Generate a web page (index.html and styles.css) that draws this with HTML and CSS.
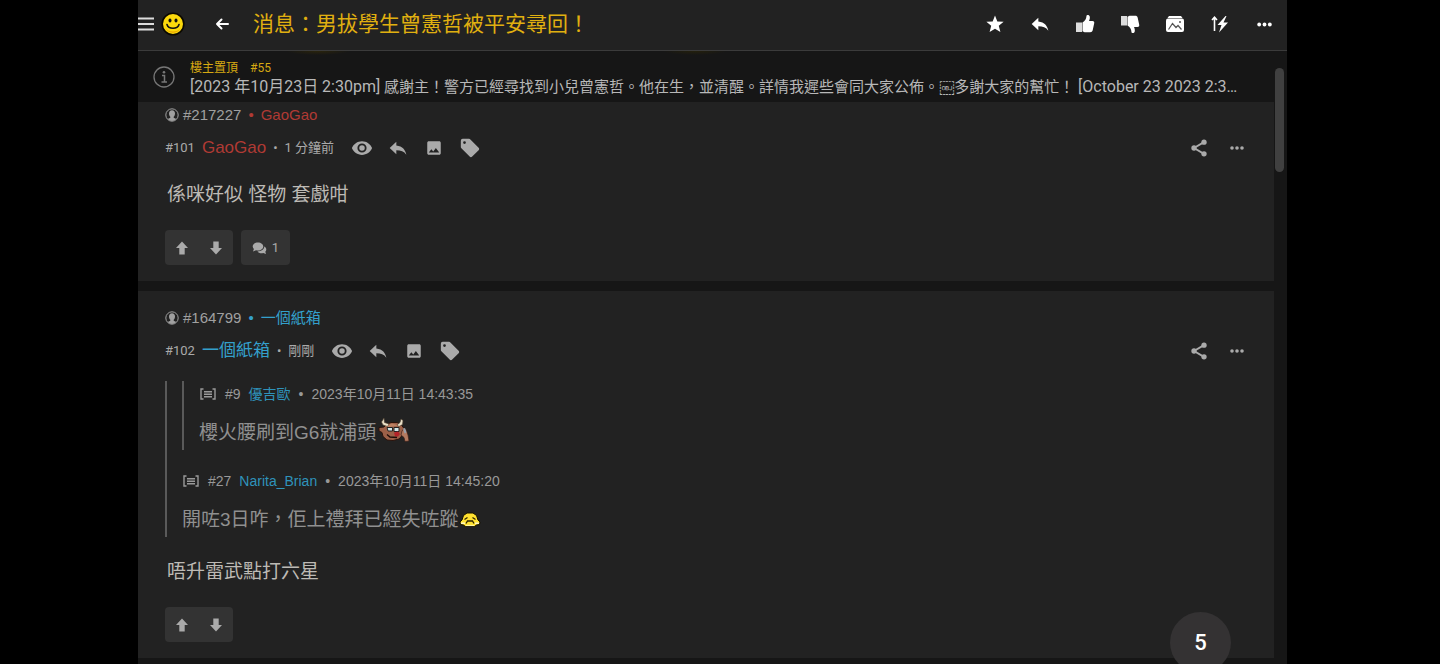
FILE: index.html
```html
<!DOCTYPE html>
<html lang="zh-HK">
<head>
<meta charset="utf-8">
<title>消息：男拔學生曾憲哲被平安尋回！</title>
<link rel="stylesheet" href="styles.css">
</head>
<body>
<svg class="sprite" aria-hidden="true">
  <symbol id="reply" viewBox="0 0 24 24"><path d="M10 9V4.500L2 12l8 7.500V14.800c5.500 0 9.200 1.500 12 5.200-1-5.500-4.500-10.200-12-11z"/></symbol>
  <symbol id="more" viewBox="0 0 24 24"><circle cx="4.500" cy="12" r="2.700"/><circle cx="12" cy="12" r="2.700"/><circle cx="19.500" cy="12" r="2.700"/></symbol>
  <symbol id="eye" viewBox="0 0 24 24"><path fill-rule="evenodd" d="M12 4.500C7 4.500 2.700 7.600 1 12c1.700 4.400 6 7.500 11 7.500s9.300-3.100 11-7.500c-1.700-4.400-6-7.500-11-7.500zM12 17a5 5 0 1 1 0-10 5 5 0 0 1 0 10zm0-8a3 3 0 1 0 0 6 3 3 0 0 0 0-6z"/></symbol>
  <symbol id="image" viewBox="0 0 24 24"><path d="M21 19V5c0-1.100-.9-2-2-2H5c-1.100 0-2 .9-2 2v14c0 1.100.9 2 2 2h14c1.100 0 2-.9 2-2zM8.500 13.500l2.500 3 3.500-4.500 4.500 6H5l3.500-4.500z"/></symbol>
  <symbol id="tag" viewBox="0 0 24 24"><path fill-rule="evenodd" d="M21.400 11.600l-9-9C12 2.200 11.500 2 11 2H4a2 2 0 0 0-2 2v7c0 .5.200 1 .6 1.400l9 9c.8.8 2 .8 2.800 0l7-7c.8-.8.800-2 0-2.800zM6 7.500a1.500 1.500 0 1 1 0-3 1.500 1.500 0 0 1 0 3z"/></symbol>
  <symbol id="share" viewBox="0 0 24 24"><path d="M18 5L6 12l12 7" fill="none" stroke="currentColor" stroke-width="2.200"/><circle cx="18" cy="5" r="3.200"/><circle cx="6" cy="12" r="3.200"/><circle cx="18" cy="19" r="3.200"/></symbol>
  <symbol id="user" viewBox="0 0 14 14"><circle cx="7" cy="7" r="6.200" fill="none" stroke="currentColor"/><path d="M7 2.200c2 0 3 1.400 3 3.300 0 1.600-.6 2.600-1.300 3.300v1l2.600 1.200C10 12.300 8.500 13 7 13s-3-.7-4.300-2l2.600-1.200v-1C4.600 8.100 4 7.100 4 5.500c0-1.900 1-3.300 3-3.300z"/></symbol>
  <symbol id="up" viewBox="0 0 14 14"><path d="M7 .5L13 7H9.700v6.500H4.300V7H1z"/></symbol>
  <symbol id="down" viewBox="0 0 14 14"><path d="M7 13.500L1 7h3.300V.5h5.400V7H13z"/></symbol>
  <symbol id="quote" viewBox="0 0 18 12"><path d="M4.500 1H2v10h2.500M13.500 1H16v10h-2.500M5 3.700h8M5 6.200h8M5 8.700h8" fill="none" stroke="currentColor" stroke-width="1.400"/></symbol>
  <symbol id="thumb" viewBox="0 0 20 20"><path d="M1 8.500h6V18H1z" fill="#ddd"/><path d="M7.500 8.500C10 7 11.300 5 11.500 1.800c.2-1.300 3-1.300 3.300 1 .2 1.600-.2 3-.8 4.300h3.500c1.500 0 2 1 1.700 2.200l-1.500 7c-.3 1.300-1.200 1.900-2.500 1.900H9.500l-2-1z"/></symbol>
</svg>
<div class="app">
  <header class="topbar">
    <button class="menu" aria-label="選單"><svg width="16" height="14" viewBox="0 0 16 14"><path d="M0 1.500h16M0 7h16M0 12.500h16" stroke="currentColor" stroke-width="2"/></svg></button>
    <a class="logo" href="#" aria-label="首頁"><svg width="24" height="24" viewBox="0 0 24 24"><circle cx="12" cy="12" r="10.800" fill="#fbd90c" stroke="#0b0800" stroke-width="1.600"/><path d="M4 15a8.500 8.500 0 0 0 16 0c-1.500 3-4.500 4.500-8 4.500S5.500 18 4 15z" fill="#e9a400"/><ellipse cx="9" cy="8.500" rx="1.500" ry="2" fill="#111"/><ellipse cx="15" cy="8.500" rx="1.500" ry="2" fill="#111"/><path d="M6 12.500c1.500 5 10.500 5 12 0" fill="none" stroke="#111" stroke-width="1.600" stroke-linecap="round"/></svg></a>
    <button class="back" aria-label="返回"><svg width="14" height="14" viewBox="0 0 14 14"><path d="M13 7H2M6.500 2.500L2 7l4.500 4.500" fill="none" stroke="currentColor" stroke-width="2" stroke-linecap="round" stroke-linejoin="round"/></svg></button>
    <h1>消息：男拔學生曾憲哲被平安尋回！</h1>
    <nav class="tools">
      <button aria-label="收藏"><svg width="18" height="18" viewBox="0 0 20 20"><path d="M10 .5l2.600 6.600 7 .4-5.400 4.500 1.800 7L10 15.200 4 19l1.800-7L.4 7.500l7-.4z"/></svg></button>
      <button aria-label="回覆"><svg width="20" height="20"><use href="#reply"/></svg></button>
      <button aria-label="正評"><svg width="20" height="20"><use href="#thumb"/></svg></button>
      <button aria-label="負評"><svg class="flip" width="20" height="20"><use href="#thumb"/></svg></button>
      <button aria-label="圖片"><svg width="18" height="18" viewBox="0 0 18 18"><path d="M3 1h12l1.500 2h-15z"/><rect y="3.500" width="18" height="13.500" rx="2"/><path d="M2.500 14.500l4-6 3.500 4 2-2 3.500 4" fill="none" stroke="#555" stroke-width="1.200"/><circle cx="14" cy="7" r="1" fill="#555"/></svg></button>
      <button aria-label="最新"><svg width="18" height="18" viewBox="0 0 18 18"><path d="M3.500 16V3M1 5l2.500-2.700L6 5" fill="none" stroke="currentColor" stroke-width="1.600"/><path d="M14.500 1L6.500 10h4l-2.500 7.500L17 7.500h-4.500L15.500 1z"/></svg></button>
      <button aria-label="更多"><svg width="17" height="17"><use href="#more"/></svg></button>
    </nav>
  </header>
  <section class="pinned">
    <svg class="info" width="22" height="22" viewBox="0 0 22 22"><circle cx="11" cy="11" r="10" fill="none" stroke="currentColor" stroke-width="1.300"/><path d="M9 9.500h2.500V16M8.500 16h5.500" fill="none" stroke="currentColor" stroke-width="1.500"/><circle cx="11" cy="6.300" r="1.300"/></svg>
    <div class="pin-text">
      <p class="pin-label"><span>樓主置頂</span><a href="#p55">#55</a></p>
      <p class="pin-body"><span class="stamp">[2023 年10月23日 2:30pm]</span> 感謝主！警方已經尋找到小兒曾憲哲。他在生，並清醒。詳情我遲些會同大家公佈。&#xFFFC;多謝大家的幫忙！ <span class="stamp">[October 23 2023 2:3…</span></p>
    </div>
  </section>
  <main class="thread">
    <div class="posts">
      <article class="post">
        <div class="member red"><svg width="14" height="14"><use href="#user"/></svg><span class="uid">#217227</span><i>•</i><a href="#u1">GaoGao</a></div>
        <div class="meta">
          <span class="no">#101</span><a class="name red" href="#u1">GaoGao</a><i>•</i><time>1 分鐘前</time>
          <div class="acts">
            <button aria-label="只看此人"><svg width="22" height="22"><use href="#eye"/></svg></button>
            <button aria-label="回覆"><svg width="20" height="20"><use href="#reply"/></svg></button>
            <button aria-label="圖片"><svg width="18" height="18"><use href="#image"/></svg></button>
            <button aria-label="標籤"><svg width="22" height="22"><use href="#tag"/></svg></button>
          </div>
          <div class="side">
            <button aria-label="分享"><svg width="20" height="20"><use href="#share"/></svg></button>
            <button aria-label="更多"><svg width="16" height="16"><use href="#more"/></svg></button>
          </div>
        </div>
        <div class="content"><p class="text">係咪好似 怪物 套戲咁</p></div>
        <div class="votes">
          <div class="pill"><button aria-label="正評"><svg width="14" height="14"><use href="#up"/></svg></button><button aria-label="負評"><svg width="14" height="14"><use href="#down"/></svg></button></div>
          <button class="pill replies"><svg width="15" height="14" viewBox="0 0 15 14"><path d="M6 1.500c3 0 5.300 1.700 5.300 4S9 9.500 6 9.500c-.7 0-1.300-.1-1.900-.3L1 10.500l.9-2.500C1.200 7.300.7 6.400.7 5.500c0-2.300 2.300-4 5.300-4z"/><path d="M12.300 5.500c1.200.7 2 1.700 2 2.900 0 .9-.4 1.700-1 2.300l.7 2.300-2.800-1c-2.200.6-4.700 0-5.700-1.600 3.800 0 6.700-2 6.800-4.900z"/></svg><span>1</span></button>
        </div>
      </article>
      <article class="post">
        <div class="member blue"><svg width="14" height="14"><use href="#user"/></svg><span class="uid">#164799</span><i>•</i><a href="#u2">一個紙箱</a></div>
        <div class="meta">
          <span class="no">#102</span><a class="name blue" href="#u2">一個紙箱</a><i>•</i><time>剛剛</time>
          <div class="acts">
            <button aria-label="只看此人"><svg width="22" height="22"><use href="#eye"/></svg></button>
            <button aria-label="回覆"><svg width="20" height="20"><use href="#reply"/></svg></button>
            <button aria-label="圖片"><svg width="18" height="18"><use href="#image"/></svg></button>
            <button aria-label="標籤"><svg width="22" height="22"><use href="#tag"/></svg></button>
          </div>
          <div class="side">
            <button aria-label="分享"><svg width="20" height="20"><use href="#share"/></svg></button>
            <button aria-label="更多"><svg width="16" height="16"><use href="#more"/></svg></button>
          </div>
        </div>
        <div class="content">
          <blockquote>
            <blockquote>
              <div class="source"><svg width="18" height="12"><use href="#quote"/></svg><span>#9</span><a class="blue" href="#u3">優吉歐</a><i>•</i><time>2023年10月11日 14:43:35</time></div>
              <p class="quoted">櫻火腰刷到G6就浦頭<svg class="bull" width="34" height="26" viewBox="0 0 34 26"><path d="M2 10.500l5-.5 3-3 4-1.500h6l4 2 3 4-1 6-4 4.500-6 1.500-6-.5-4-3.500-1-4-3-1.500z" fill="#9c6048" stroke="#2a130c"/><path d="M8 9l7-2.500 7 2-12 2z" fill="#bd8163"/><path d="M7 1l.5 4.500L12 7l-1.500 2.500L6 8 4.500 5zM24 2l2 1.500-.5 4L22 9.500 20 8l3-2.500z" fill="#e9dfc6" stroke="#4a3a2c" stroke-width=".6"/><path d="M10 10.500h5.500v3.500H11zM17 10.500h5v4h-5z" fill="#d3e6e8" stroke="#222"/><path d="M17 15.500l4-1 2 2.500-2 2.500h-3z" fill="#b32228"/><path d="M10 17.500l3 2.500 7 .5" fill="none" stroke="#1d0c08" stroke-width="1.300"/><path d="M25 14l2-2.500 2 1 2 5.500 1 6-4 .5-1-4-3-2.500z" fill="#b47a60" stroke="#3b2018" stroke-width=".7"/><path d="M26 11.500l2-.5 1.500 4.500-2 1z" fill="#98a0aa"/></svg></p>
            </blockquote>
            <div class="source"><svg width="18" height="12"><use href="#quote"/></svg><span>#27</span><a class="blue" href="#u4">Narita_Brian</a><i>•</i><time>2023年10月11日 14:45:20</time></div>
            <p class="quoted">開咗3日咋，佢上禮拜已經失咗蹤<svg class="sad" width="22" height="16" viewBox="0 0 22 16"><path d="M8 1h6l3.500 2.500L19 8l2 2-.5 2.500-3 .5-2 1.500h-9L4.500 13l-3-.5L1 10l2-2 1.500-4.500z" fill="#ffe130" stroke="#151000"/><path d="M5.500 7.500L8.500 5.500M13.500 5.500l3 2M7 11.500l1.500-2.500h5l1.500 2.500" fill="none" stroke="#2b2100" stroke-width="1.300"/><path d="M7 13.500h8" stroke="#fff6a0" stroke-width="1.200"/><path d="M2 10.500h4v1.500H2zM16 10.500h4v1.500h-4z" fill="#fff9c0"/></svg></p>
          </blockquote>
          <p class="text">唔升雷武點打六星</p>
        </div>
        <div class="votes">
          <div class="pill"><button aria-label="正評"><svg width="14" height="14"><use href="#up"/></svg></button><button aria-label="負評"><svg width="14" height="14"><use href="#down"/></svg></button></div>
        </div>
      </article>
    </div>
    <div class="track"><div class="handle"></div></div>
  </main>
  <button class="page">5</button>
</div>
</body>
</html>
```
FILE: styles.css
```css
* { box-sizing: border-box; }
html, body { height: 100%; }
body {
  margin: 0;
  padding: 0 153px 0 138px;
  background: #000;
  color: #aaa;
  font-family: "Liberation Sans", "Noto Sans CJK TC", sans-serif;
  overflow: hidden;
}
h1, p, blockquote { margin: 0; font-weight: 400; }
a { color: inherit; text-decoration: none; }
i { font-style: normal; }
svg { display: block; fill: currentColor; flex: none; }
.sprite { width: 0; height: 0; position: absolute; }
button {
  display: flex;
  align-items: center;
  justify-content: center;
  padding: 0;
  border: 0;
  background: none;
  color: inherit;
  font-family: Roboto, "Noto Sans CJK TC", sans-serif;
}
.red { color: #b03a34; }
.blue { color: #34a0cc; }

.app {
  position: relative;
  display: flex;
  flex-direction: column;
  height: 100%;
  background: #161616;
  overflow: hidden;
}
.topbar {
  display: flex;
  align-items: center;
  height: 51px;
  flex: none;
  padding-bottom: 2px;
  background: #222;
  border-bottom: 1px solid #3b3b3b;
  color: #fff;
}
.menu { color: #ddd; }
.logo { margin-left: 7px; }
.back { width: 34px; margin-left: 20px; }
.topbar h1 {
  flex: 1;
  min-width: 0;
  margin-left: 14px;
  color: #e0b010;
  font-size: 21px;
  line-height: 30px;
  white-space: nowrap;
  overflow: hidden;
}
.tools { display: flex; }
.tools button { width: 45px; height: 40px; }
.flip { transform: scaleY(-1); }

.pinned {
  display: flex;
  align-items: center;
  gap: 15px;
  height: 51px;
  flex: none;
  padding: 0 24px 0 15px;
  background:
    radial-gradient(32px 4px at 180px 0, #2a240c, transparent),
    radial-gradient(32px 4px at 557px 0, #24200c, transparent),
    #161616;
  font-family: Roboto, "Noto Sans CJK TC", sans-serif;
  position: relative;
}
.info { color: #777; }
.pin-text { flex: 1; min-width: 0; padding-top: 4px; }
.pin-label {
  display: flex;
  gap: 12px;
  color: #d6a912;
  font-size: 12px;
  line-height: 16px;
}
.pin-body {
  color: #b8b8b8;
  font-size: 15px;
  line-height: 21px;
  white-space: nowrap;
}
.stamp { font-size: 16px; }

.thread { display: flex; flex: 1; min-height: 0; }
.posts {
  flex: 1;
  min-width: 0;
  display: flex;
  flex-direction: column;
  gap: 10px;
  margin-top: -14px;
}
.track {
  width: 13px;
  margin-top: -34px;
  padding: 0 3px 0 1px;
  z-index: 1;
}
.handle { height: 104px; border-radius: 5px; background: #404040; }
.post { padding: 18px 18px 16px 27px; background: #222; }
.member {
  display: flex;
  align-items: center;
  height: 18px;
  font-size: 15px;
  line-height: 16px;
}
.member svg, .uid { color: #a0a0a0; }
.uid { margin: 0 7px 0 4px; }
.member i { margin-right: 7px; }
.meta {
  display: flex;
  align-items: center;
  height: 30px;
  margin-top: 9px;
  font-family: Roboto, "Noto Sans CJK TC", sans-serif;
  font-size: 13px;
  line-height: 16px;
}
.name {
  margin: 0 7px;
  font-family: "Liberation Sans", "Noto Sans CJK TC", sans-serif;
  font-size: 17px;
}
.meta time { margin-left: 7px; }
.acts { display: flex; margin-left: 10px; }
.acts button { width: 36px; height: 30px; }
.side { display: flex; margin-left: auto; }
.side button { width: 38px; height: 30px; }
.content { margin-top: 15px; }
.text {
  padding: 1px 0 0 2px;
  color: #bdbab5;
  font-size: 19px;
  line-height: 32px;
}
blockquote {
  padding: 0 0 1px 15px;
  border-left: 2px solid #5a5a5a;
}
.content > blockquote { margin-bottom: 18px; }
blockquote blockquote { margin-bottom: 18px; }
.source {
  display: flex;
  align-items: center;
  gap: 8px;
  height: 26px;
  font-size: 14px;
  line-height: 16px;
  color: #999;
}
.source .blue { color: #2f93bb; }
.quoted {
  display: flex;
  align-items: center;
  margin-top: 10px;
  color: #909090;
  font-size: 19px;
  line-height: 32px;
}
.bull { margin: -6px 0 0 1px; }
.votes { display: flex; gap: 8px; margin-top: 19px; }
.pill {
  display: flex;
  height: 35px;
  border-radius: 4px;
  background: #333;
}
.pill button { width: 34px; }
.replies { width: 49px; gap: 5px; font-size: 13px; }
.page {
  position: absolute;
  right: 56px;
  bottom: -9px;
  width: 61px;
  height: 61px;
  border-radius: 50%;
  background: #343233;
  color: #fff;
  font-size: 22px;
  font-weight: 500;
}
```
